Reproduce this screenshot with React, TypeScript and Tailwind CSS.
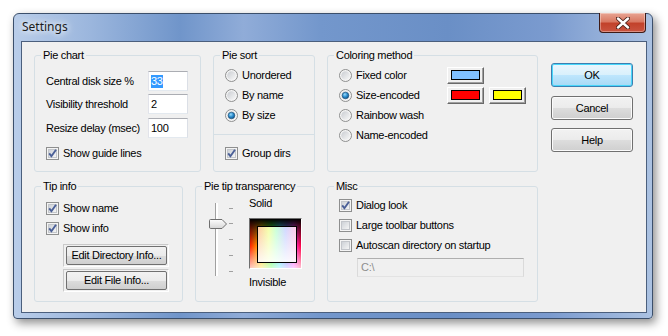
import { useId } from "react";

type BoxProps = {
    checked?: boolean;
}

function CheckBox({ checked }: BoxProps) {
    const id = useId();
    return (
        <svg width="13" height="13" viewBox="0 0 13 13" className="shrink-0">
            <defs>
                <linearGradient id={id} x1="0" y1="0" x2="1" y2="1">
                    <stop offset="0" stopColor="#cbcfd5" />
                    <stop offset="1" stopColor="#f7f7f7" />
                </linearGradient>
            </defs>
            <rect x="0.5" y="0.5" width="12" height="12" fill="#f4f4f4" stroke="#8e8f8f" />
            <rect x="2.5" y="2.5" width="8" height="8" fill={`url(#${id})`} stroke="#c3c6cb" />
            {checked && <path d="M3.2 6.4 L5.4 9.2 L10 2.8" fill="none" stroke="#4a5f97" strokeWidth="1.9" />}
        </svg>
    );
}

function Radio({ checked }: BoxProps) {
    const id = useId();
    return (
        <svg width="13" height="13" viewBox="0 0 13 13" className="shrink-0">
            <defs>
                <linearGradient id={id} x1="0" y1="0" x2="1" y2="1">
                    <stop offset="0" stopColor="#c9ccd1" />
                    <stop offset="1" stopColor="#f8f8f8" />
                </linearGradient>
                <radialGradient id={id + "d"} cx="0.4" cy="0.35" r="0.7">
                    <stop offset="0" stopColor="#9ddcfb" />
                    <stop offset="0.5" stopColor="#2d8fd0" />
                    <stop offset="1" stopColor="#0b4f86" />
                </radialGradient>
            </defs>
            <circle cx="6.5" cy="6.5" r="6" fill="#f4f4f4" stroke="#8e8f8f" />
            <circle cx="6.5" cy="6.5" r="4.3" fill={`url(#${id})`} />
            {checked && <circle cx="6.5" cy="6.5" r="3.3" fill={`url(#${id}d)`} stroke="#1d4d74" strokeWidth="0.6" />}
        </svg>
    );
}

function Check({ label, checked, className }: { label: string; checked?: boolean; className?: string }) {
    return (
        <div className={`flex h-[20px] items-center gap-[4px] ${className ?? ""}`}>
            <CheckBox checked={checked} />
            <span>{label}</span>
        </div>
    );
}

function Option({ label, checked, className }: { label: string; checked?: boolean; className?: string }) {
    return (
        <div className={`flex h-[20px] items-center gap-[4px] ${className ?? ""}`}>
            <Radio checked={checked} />
            <span>{label}</span>
        </div>
    );
}

function GroupBox({ title, className, children }: { title: string; className: string; children: React.ReactNode }) {
    return (
        <fieldset className={`min-w-0 shrink-0 rounded-[3px] border border-[#d5dfe5] ${className}`}>
            <legend className="ml-[6px] px-[2px] leading-[13px]">{title}</legend>
            {children}
        </fieldset>
    );
}

function TextBox({ value, selected }: { value: string; selected?: boolean }) {
    return (
        <div className="flex h-[20px] w-[40px] items-center border border-[#abadb3] border-l-[#e2e3ea] border-r-[#dbdfe6] border-b-[#e3e9ef] bg-white pl-[2px]">
            <span className={selected ? "bg-[#3399ff] text-white" : ""}>{value}</span>
        </div>
    );
}

function DialogButton({ label, primary, className }: { label: string; primary?: boolean; className?: string }) {
    return (
        <div
            className={`flex h-[24px] w-[82px] items-center justify-center rounded-[3px] border ${
                primary
                    ? "border-[#3c7fb1] bg-[linear-gradient(to_bottom,#eaf6fd_0%,#d9f0fc_50%,#bee6fd_51%,#a7d9f5_100%)] shadow-[inset_0_0_0_1px_#48d7fb]"
                    : "border-[#707070] bg-[linear-gradient(to_bottom,#f2f2f2_0%,#ebebeb_50%,#dddddd_51%,#cfcfcf_100%)] shadow-[inset_0_0_0_1px_#fbfbfb]"
            } ${className ?? ""}`}
        >
            {label}
        </div>
    );
}

function InfoButton({ label }: { label: string }) {
    return (
        <div className="h-[23px] w-[106px] border border-[#c9c9c9] border-r-white border-b-white p-[1px] pl-[2px]">
            <div className="flex h-full items-center justify-center rounded-[2px] border border-[#707070] bg-[linear-gradient(to_bottom,#f2f2f2_0%,#ebebeb_50%,#dddddd_51%,#cfcfcf_100%)]">
                {label}
            </div>
        </div>
    );
}

function ColorButton({ color, className }: { color: string; className?: string }) {
    return (
        <div className={`flex h-[17px] w-[37px] items-center justify-center border border-t-white border-l-white border-r-[#696969] border-b-[#696969] bg-[#f0f0f0] shadow-[inset_-1px_-1px_0_#a0a0a0] ${className ?? ""}`}>
            <div className="h-[10px] w-[29px] border border-black" style={{ backgroundColor: color }} />
        </div>
    );
}

function TransparencySlider() {
    const ticks = [7, 22, 38, 54, 70];
    return (
        <svg width="30" height="78" viewBox="0 0 30 78" className="mt-[8px] shrink-0">
            <defs>
                <linearGradient id="thumb" x1="0" y1="0" x2="0" y2="1">
                    <stop offset="0" stopColor="#fdfdfd" />
                    <stop offset="1" stopColor="#d6d6d6" />
                </linearGradient>
            </defs>
            <rect x="9" y="2" width="1" height="73" fill="#a0a0a0" />
            <rect x="10" y="2" width="2" height="73" fill="#ffffff" />
            {ticks.map((y) => (
                <rect key={y} x="23" y={y} width="4" height="1" fill="#a0a0a0" />
            ))}
            <path d="M4.5 18.5 Q3.5 18.5 3.5 19.5 V26 Q3.5 27.5 4.5 27.5 H16 L20.5 23 L16 18.5 Z" fill="url(#thumb)" stroke="#6f6f6f" />
        </svg>
    );
}

export default function App() {
    return (
        <div className="h-[336px] w-[668px] overflow-hidden bg-white pt-[13px] pl-[13px] font-['Liberation_Sans',Arial,sans-serif] text-[11px] leading-[13px] tracking-[-0.3px] text-black">
            <div className="flex h-[306px] w-[640px] flex-col rounded-t-[6px] rounded-b-[4px] border border-[#3b4f6b] bg-[linear-gradient(90deg,#b9cde9_0%,#9bb6dd_12%,#7095ca_26%,#90acd8_36%,#7397cc_48%,#6a8fc6_68%,#7b9bcf_84%,#abc2e2_100%)] pr-[5px] pb-[5px] pl-[7px] shadow-[3px_4px_10px_rgba(0,0,0,0.45)]">
                <div className="flex h-[27px] items-start justify-between">
                    <span className="pt-[6px] pl-[1px] font-['Noto_Sans',sans-serif] text-[12px] leading-[14px] tracking-normal text-[#1b1b1b] [text-shadow:0_0_6px_#ffffff,0_0_10px_#ffffff]">
                        Settings
                    </span>
                    <div className="-mt-[1px] mr-[1px] flex h-[20px] w-[47px] items-center justify-center rounded-b-[4px] border border-t-0 border-[#3e1b16] bg-[linear-gradient(to_bottom,#e8a493_0%,#d97a64_45%,#c2422b_55%,#c95440_100%)] shadow-[inset_0_0_0_1px_rgba(255,255,255,0.35)]">
                        <svg width="14" height="12" viewBox="0 0 14 12">
                            <path d="M2 1.5 L12 10.5 M12 1.5 L2 10.5" stroke="#4a2018" strokeWidth="4.2" strokeLinecap="round" />
                            <path d="M2 1.5 L12 10.5 M12 1.5 L2 10.5" stroke="#ffffff" strokeWidth="2.4" strokeLinecap="round" />
                        </svg>
                    </div>
                </div>

                <div className="flex flex-1 border border-[#4b5f7d] bg-[#f0f0f0] pt-[7px] pl-[12px]">
                    <div className="flex flex-col gap-[8px]">
                        <div className="flex gap-[12px]">
                            <GroupBox title="Pie chart" className="h-[123px] w-[167px]">
                                <div className="pl-[11px]">
                                    <div className="mt-[9px] flex h-[20px] items-center">
                                        <span className="w-[102px]">Central disk size %</span>
                                        <TextBox value="33" selected />
                                    </div>
                                    <div className="mt-[3px] flex h-[20px] items-center">
                                        <span className="w-[102px]">Visibility threshold</span>
                                        <TextBox value="2" />
                                    </div>
                                    <div className="mt-[4px] flex h-[20px] items-center">
                                        <span className="w-[102px]">Resize delay (msec)</span>
                                        <TextBox value="100" />
                                    </div>
                                    <Check label="Show guide lines" checked className="mt-[5px]" />
                                </div>
                            </GroupBox>

                            <GroupBox title="Pie sort" className="h-[123px] w-[102px]">
                                <div className="mt-[3px] pl-[11px]">
                                    <Option label="Unordered" />
                                    <Option label="By name" />
                                    <Option label="By size" checked />
                                </div>
                                <div className="mt-[9px] border-t border-[#d5dfe5]" />
                                <Check label="Group dirs" checked className="mt-[8px] pl-[11px]" />
                            </GroupBox>

                            <GroupBox title="Coloring method" className="h-[123px] w-[211px]">
                                <div className="mt-[3px] pl-[11px]">
                                    <div className="flex items-center">
                                        <Option label="Fixed color" className="w-[108px]" />
                                        <ColorButton color="#80c0ff" />
                                    </div>
                                    <div className="flex items-center">
                                        <Option label="Size-encoded" checked className="w-[108px]" />
                                        <ColorButton color="#ff0000" />
                                        <ColorButton color="#ffff00" className="ml-[5px]" />
                                    </div>
                                    <Option label="Rainbow wash" />
                                    <Option label="Name-encoded" />
                                </div>
                            </GroupBox>
                        </div>

                        <div className="flex gap-[12px]">
                            <GroupBox title="Tip info" className="h-[122px] w-[149px]">
                                <div className="mt-[5px] pl-[11px]">
                                    <Check label="Show name" checked />
                                    <Check label="Show info" checked />
                                    <div className="mt-[6px] ml-[17px] flex flex-col gap-[2px]">
                                        <InfoButton label="Edit Directory Info..." />
                                        <InfoButton label="Edit File Info..." />
                                    </div>
                                </div>
                            </GroupBox>

                            <GroupBox title="Pie tip transparency" className="h-[122px] w-[120px]">
                                <div className="flex pl-[10px]">
                                    <TransparencySlider />
                                    <div className="mt-[4px] ml-[13px] flex flex-col">
                                        <span>Solid</span>
                                        <div className="mt-[8px] flex h-[51px] w-[53px] items-start border border-t-[#6f6f6f] border-l-[#6f6f6f] border-r-white border-b-white bg-[linear-gradient(to_bottom,#000000_0%,rgba(0,0,0,0.55)_22%,rgba(0,0,0,0)_55%,rgba(255,255,255,0.75)_100%),linear-gradient(to_right,#ff2000_0%,#ffd000_22%,#40ff40_42%,#40e0ff_58%,#8080ff_72%,#ff40ff_86%,#ff0040_100%)] pt-[7px] pl-[7px]">
                                            <div className="h-[37px] w-[40px] border border-black bg-[linear-gradient(to_bottom,rgba(255,255,255,0)_0%,rgba(255,255,255,0.85)_100%),linear-gradient(to_right,#ffc8a0_0%,#f4ffa8_28%,#c8ffd8_48%,#d0d8ff_72%,#ffc8e8_100%)]" />
                                        </div>
                                        <span className="mt-[7px]">Invisible</span>
                                    </div>
                                </div>
                            </GroupBox>

                            <GroupBox title="Misc" className="h-[122px] w-[211px]">
                                <div className="mt-[2px] pl-[11px]">
                                    <Check label="Dialog look" checked />
                                    <Check label="Large toolbar buttons" />
                                    <Check label="Autoscan directory on startup" />
                                    <div className="mt-[3px] ml-[18px] flex h-[19px] w-[167px] items-center border border-[#afafaf] border-l-[#dadada] border-r-[#dadada] border-b-[#e3e3e3] bg-[#f0f0f0] pl-[3px] text-[#8d8d8d]">
                                        C:\
                                    </div>
                                </div>
                            </GroupBox>
                        </div>
                    </div>

                    <div className="mt-[14px] ml-[13px] flex flex-col">
                        <DialogButton label="OK" primary />
                        <DialogButton label="Cancel" className="mt-[9px]" />
                        <DialogButton label="Help" className="mt-[8px]" />
                    </div>
                </div>
            </div>
        </div>
    );
}
